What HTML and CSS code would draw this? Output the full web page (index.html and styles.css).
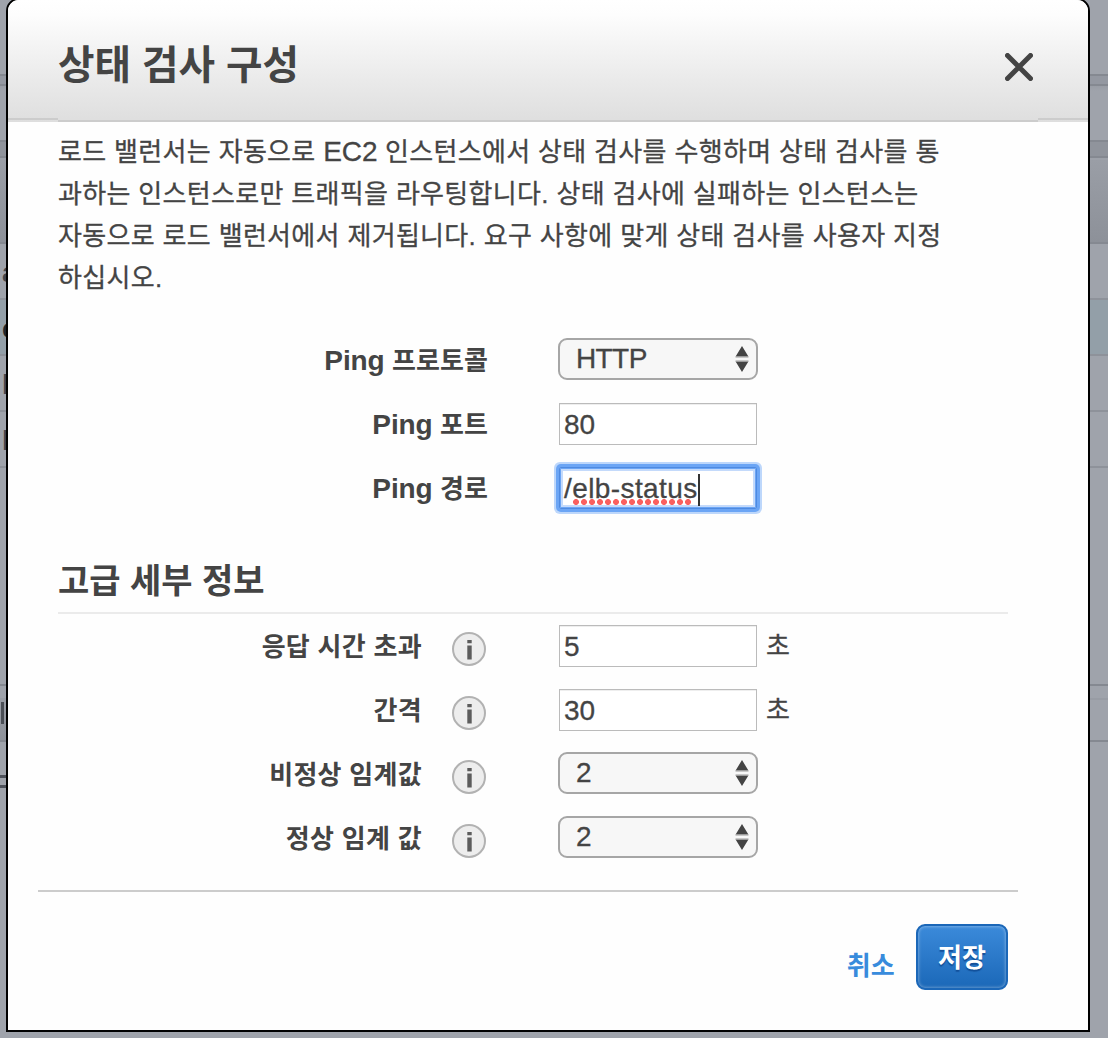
FILE: index.html
```
<!DOCTYPE html>
<html lang="ko">
<head>
<meta charset="utf-8">
<title>상태 검사 구성</title>
<link rel="stylesheet" href="styles.css">
</head>
<body>
<svg class="defs" aria-hidden="true">
  <symbol id="arrows" viewBox="0 0 14 28"><path d="M7 1L13.4 11.5H.6zM7 27L13.4 16.5H.6z" fill="#444"/><path d="M.5 12h13M.5 16h13" stroke="#999" stroke-width="1"/></symbol>
  <symbol id="info" viewBox="0 0 36 36"><circle cx="18" cy="18" r="16" fill="#ededed" stroke="#b2b2b2" stroke-width="2"/><path d="M18.5 9v3.2M18.5 14.5v14" stroke="#5c5c5c" stroke-width="4.4"/></symbol>
</svg>
<div class="backdrop" aria-hidden="true">
  <div class="bar top"></div>
  <div class="bar tabs"></div>
  <div class="bar tools"></div>
  <div class="bar gap"></div>
  <div class="bar head"></div>
  <div class="bar row">a</div>
  <div class="bar row selected">e</div>
  <div class="bar row">l</div>
  <div class="bar row">l</div>
  <div class="bar blank"></div>
  <div class="bar split"></div>
  <div class="bar detail"><span class="tick"></span></div>
  <div class="bar foot"><span class="dash"></span></div>
</div>
<div class="dialog" role="dialog">
  <header class="header">
    <div class="header-inner">
      <h1 class="title">상태 검사 구성</h1>
      <svg class="close" viewBox="0 0 28 28"><path d="M2.5 2.5l23 23M25.5 2.5l-23 23" stroke="#444" stroke-width="5" stroke-linecap="round"/></svg>
    </div>
  </header>
  <main class="content">
    <p class="intro">로드 밸런서는 자동으로 <span class="latin">EC2</span> 인스턴스에서 상태 검사를 수행하며 상태 검사를 통<br>과하는 인스턴스로만 트래픽을 라우팅합니다. 상태 검사에 실패하는 인스턴스는<br>자동으로 로드 밸런서에서 제거됩니다. 요구 사항에 맞게 상태 검사를 사용자 지정<br>하십시오.</p>
    <div class="form">
      <div class="field"><span class="label"><span class="latin">Ping</span> 프로토콜</span><div class="select protocol">HTTP<svg class="arrows"><use href="#arrows"/></svg></div></div>
      <div class="field"><span class="label"><span class="latin">Ping</span> 포트</span><div class="input">80</div></div>
      <div class="field"><span class="label"><span class="latin">Ping</span> 경로</span><div class="input focused">/<span class="misspelled">elb-status</span><span class="caret"></span></div></div>
    </div>
    <h2 class="subtitle">고급 세부 정보</h2>
    <div class="form advanced">
      <div class="field"><span class="label">응답 시간 초과</span><svg class="info"><use href="#info"/></svg><div class="input">5</div><span class="unit">초</span></div>
      <div class="field"><span class="label">간격</span><svg class="info"><use href="#info"/></svg><div class="input">30</div><span class="unit">초</span></div>
      <div class="field"><span class="label">비정상 임계값</span><svg class="info"><use href="#info"/></svg><div class="select">2<svg class="arrows"><use href="#arrows"/></svg></div></div>
      <div class="field"><span class="label">정상 임계 값</span><svg class="info"><use href="#info"/></svg><div class="select">2<svg class="arrows"><use href="#arrows"/></svg></div></div>
    </div>
  </main>
  <footer class="footer">
    <a class="cancel">취소</a>
    <div class="save">저장</div>
  </footer>
</div>
</body>
</html>
```
FILE: styles.css
```
* { box-sizing: border-box; }
body {
  margin: 0;
  height: 1038px;
  position: relative;
  overflow: hidden;
  color: #444;
  font: 26px/42px "Liberation Sans", "Noto Sans CJK KR", sans-serif;
}
.defs { position: absolute; width: 0; height: 0; }

/* Dimmed page behind the dialog */
.backdrop { height: 1038px; background: #9fa3ab; }
.bar { border-bottom: 2px solid #8e929a; overflow: hidden; }
.top { height: 76px; border-color: #858991; }
.tabs { height: 10px; background: #9498a1; border-color: #858991; }
.tools { height: 56px; border-color: #858991; background: linear-gradient(#999da5, #9fa3ab 5px); }
.gap { height: 16px; background: #90949c; border-color: #858991; }
.head { height: 86px; background: linear-gradient(#9a9ea6, #8d9199); border-top: 2px solid #9da1a9; border-color: #9da1a9 transparent #858991; }
.row { height: 56px; padding-left: 2px; color: #41454c; font-weight: bold; font-size: 28px; line-height: 58px; }
.selected { background: #939fa8; color: #20262c; }
.blank { height: 218px; border-color: #858991; }
.split { height: 14px; border-color: #989ca4; }
.detail { height: 42px; background: linear-gradient(90deg, transparent 8px, #9fa3ab 8px), linear-gradient(#999da5, #8e929a); border-color: #858991; }
.tick { display: block; width: 3px; height: 22px; margin: 2px 0 0 1px; background: #4a4e55; }
.foot { height: 296px; border: 0; padding-top: 33px; }
.dash { display: block; width: 7px; height: 13px; border: solid #4d515a; border-width: 3px 0; }

.dialog {
  position: absolute;
  left: 6px;
  top: -2px;
  width: 1084px;
  height: 1034px;
  background: #fefefe;
  border: 2px solid #000;
  border-radius: 13px 13px 0 0;
  overflow: hidden;
}
.header {
  height: 122px;
  padding: 0 50px;
  background:
    linear-gradient(#ccc, #ccc) 0 118px / 50px 2px no-repeat,
    linear-gradient(#ccc, #ccc) 100% 118px / 50px 2px no-repeat,
    linear-gradient(#fff, #fdfdfd 12%, #dedede);
}
.header-inner {
  height: 122px;
  display: flex;
  justify-content: space-between;
  border-bottom: 2px solid #ccc;
}
.title { margin: 0; font-size: 39.7px; line-height: 131px; }
.close { width: 28px; height: 28px; margin: 53px 5px 0 0; }

.content { height: 768px; padding: 9px 80px 0 50px; }
.intro { margin: 0; letter-spacing: .31px; word-spacing: .1px; white-space: nowrap; -webkit-text-stroke: .3px #444; }
.latin { font-size: 28px; letter-spacing: -.1px; line-height: 1; }
.form { display: grid; gap: 22px; margin-top: 39px; }
.field { display: flex; height: 42px; }
.label { width: 430px; margin-right: 70px; text-align: right; font-weight: bold; line-height: 46px; letter-spacing: .1px; }
.advanced .label { width: 364px; margin-right: 29px; letter-spacing: .3px; }
.info { width: 36px; height: 36px; margin: 7px 71px 0 0; }
.input {
  position: relative;
  flex: none;
  width: 198px;
  height: 42px;
  margin: 1px 1px 0;
  padding-left: 4px;
  border: 1px solid #bbb;
  box-shadow: inset 0 1px #eee;
  background: #fff;
  font-size: 28px;
  line-height: 41px;
  -webkit-text-stroke: .3px #444;
}
.focused {
  letter-spacing: .4px;
  border-color: #4f8ae0;
  box-shadow: 0 0 0 3px #6ba5f5, 0 0 0 5px #bdd7fb, inset 0 0 0 1px #6ba5f5, inset 0 0 0 3px #c4dafb;
  border-radius: 2px;
}
.misspelled { position: relative; }
.misspelled::after {
  content: "";
  position: absolute;
  left: 1px;
  top: 26px;
  width: 120px;
  height: 6px;
  background: radial-gradient(circle at 3px 3px, #fa605f 2.6px, transparent 3.3px) 0 0 / 8px 6px;
}
.caret { display: inline-block; width: 2px; height: 32px; vertical-align: -8px; background: #333; }
.select {
  display: flex;
  justify-content: space-between;
  width: 200px;
  height: 42px;
  padding: 0 7px 0 16px;
  border: 2px solid #a6a6a6;
  border-radius: 9px;
  background: #f7f7f7;
  font-size: 28px;
  line-height: 37px;
  -webkit-text-stroke: .3px #444;
}
.protocol { letter-spacing: -.6px; }
.arrows { width: 14px; height: 28px; margin-top: 5px; }
.unit { margin-left: 8px; line-height: 44px; -webkit-text-stroke: .3px #444; }
.subtitle { height: 62px; margin: 44px 0 0; border-bottom: 2px solid #ebebeb; font-size: 34px; line-height: 58px; }
.advanced { margin-top: 10px; }

.footer {
  display: flex;
  justify-content: flex-end;
  width: 980px;
  margin-left: 30px;
  padding: 32px 10px 0 0;
  border-top: 2px solid #ccc;
  font-weight: bold;
  letter-spacing: .2px;
}
.cancel { margin: 21px 21px 0 0; color: #388bdc; }
.save {
  width: 92px;
  height: 66px;
  border: 2px solid #1b67b8;
  border-radius: 9px;
  background: linear-gradient(#3b8ada, #1b68b8);
  box-shadow: inset 0 0 3px 1px rgba(255, 255, 255, .3);
  color: #fff;
  text-align: center;
  line-height: 65px;
  text-shadow: 0 2px 1px #12509a;
}
```
